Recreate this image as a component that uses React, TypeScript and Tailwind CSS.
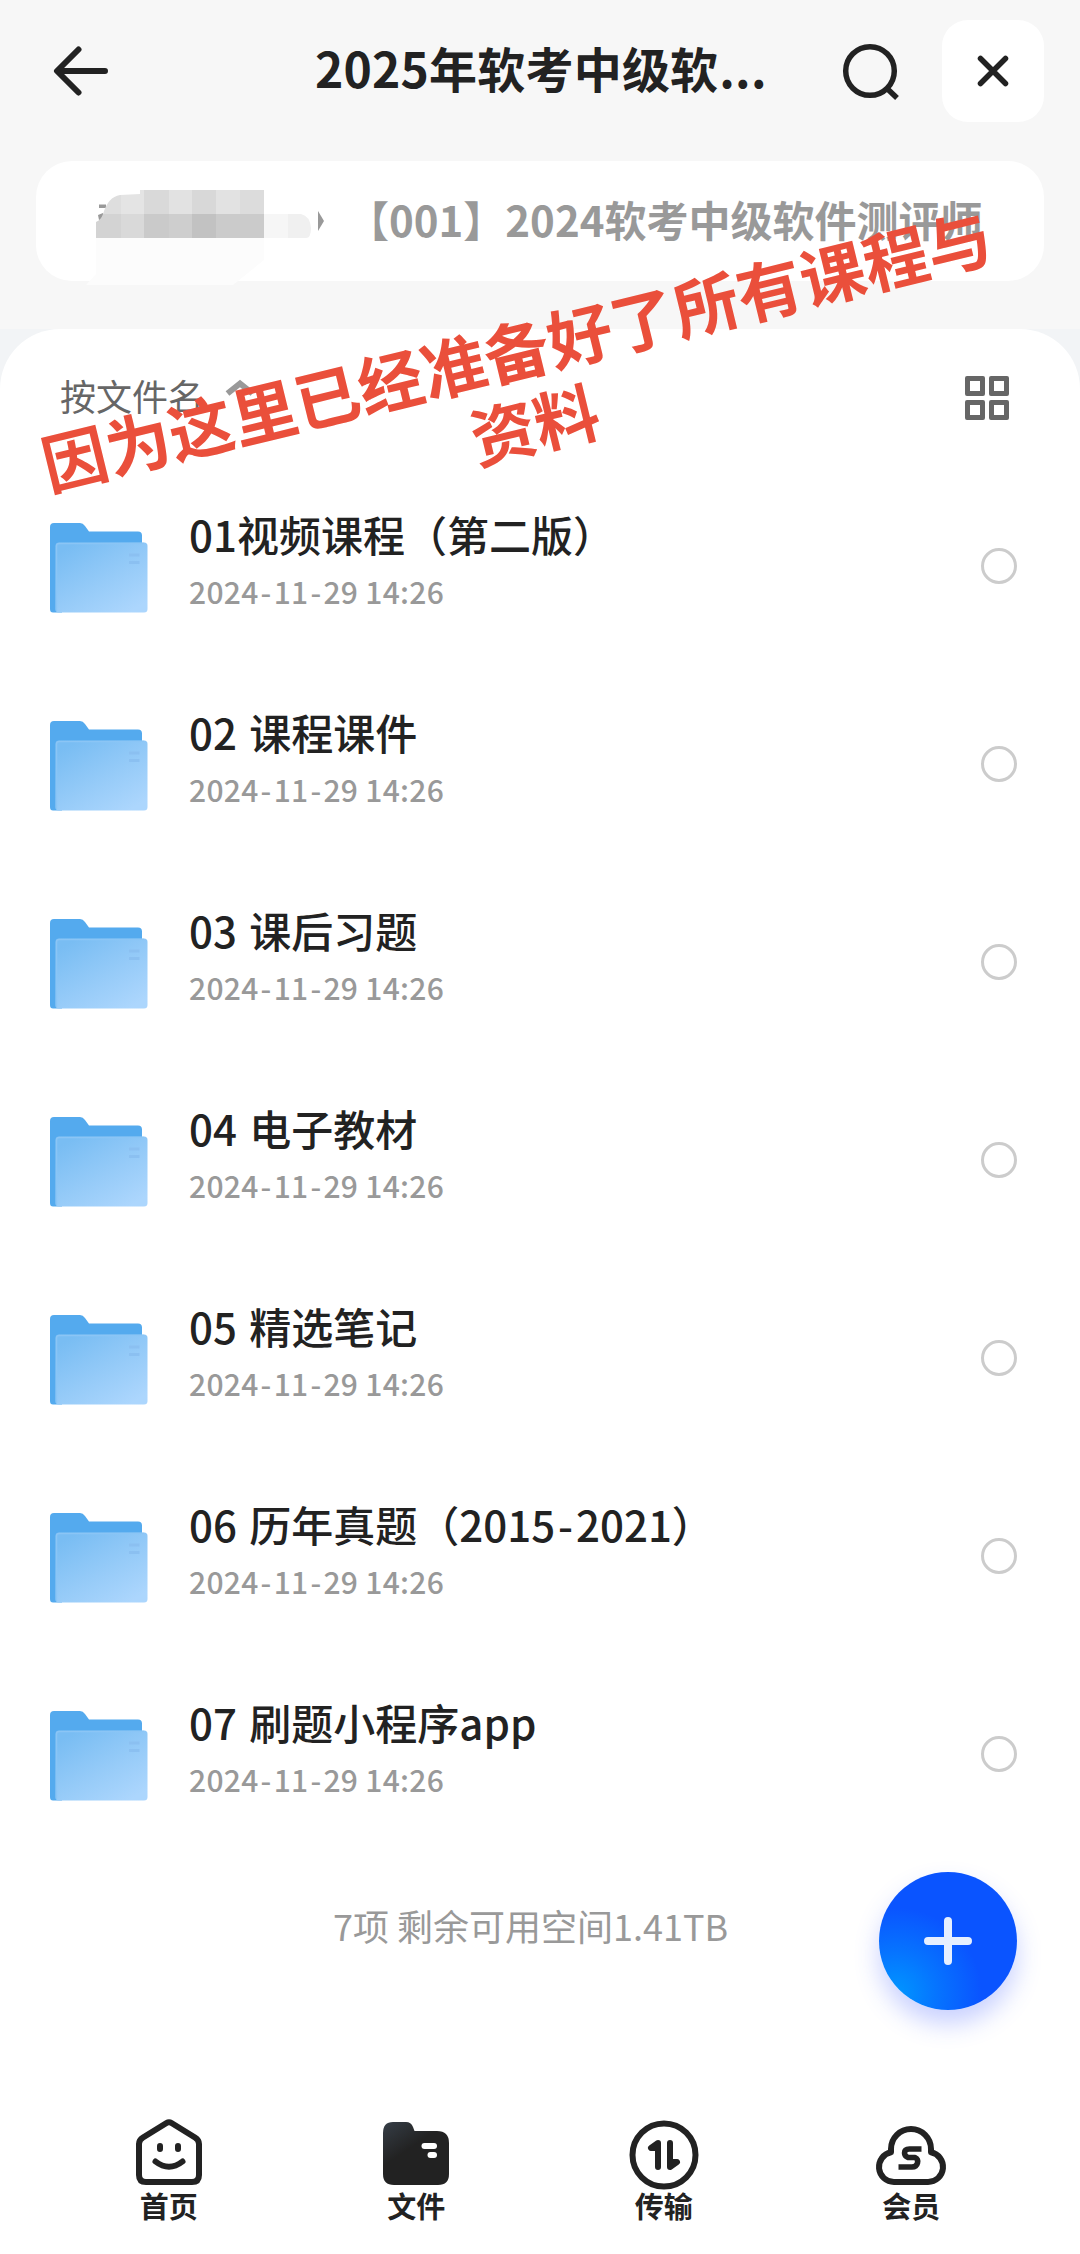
import { useState } from 'react'

type FileItem = {
  id: number
  name: string
  date: string
}

const files: FileItem[] = [
  { id: 1, name: '01视频课程（第二版）', date: '2024-11-29 14:26' },
  { id: 2, name: '02 课程课件', date: '2024-11-29 14:26' },
  { id: 3, name: '03 课后习题', date: '2024-11-29 14:26' },
  { id: 4, name: '04 电子教材', date: '2024-11-29 14:26' },
  { id: 5, name: '05 精选笔记', date: '2024-11-29 14:26' },
  { id: 6, name: '06 历年真题（2015-2021）', date: '2024-11-29 14:26' },
  { id: 7, name: '07 刷题小程序app', date: '2024-11-29 14:26' },
]

function BackIcon() {
  return (
    <svg width="56" height="50" viewBox="0 0 56 50" fill="none" stroke="#222" strokeWidth="6" strokeLinecap="round" strokeLinejoin="round">
      <path d="M25.500 3.500 L4 25 L25.500 46.500 M5 25 H52" />
    </svg>
  )
}

function SearchIcon() {
  return (
    <svg width="60" height="60" viewBox="0 0 60 60" fill="none" stroke="#222" strokeWidth="5.5">
      <circle cx="30" cy="30" r="24.3" />
      <path d="M46.500 47 L57 57" />
    </svg>
  )
}

function FolderIcon() {
  return (
    <svg width="98" height="90" viewBox="0 0 98 90" className="mt-[3px] block shrink-0">
      <defs>
        <linearGradient id="front" x1="0.1" y1="0.1" x2="0.8" y2="1">
          <stop offset="0" stopColor="#79bdf3" />
          <stop offset="0.55" stopColor="#96cbf8" />
          <stop offset="1" stopColor="#acd6fd" />
        </linearGradient>
      </defs>
      <path d="M4 0 H30 Q33 0 35 3 L39 8.500 H88 Q92 8.500 92 12.500 V60 H12 V89.500 H3 Q0 89.500 0 86 V4 Q0 0 4 0Z" fill="#54aaee" />
      <rect x="5.500" y="19.500" width="92" height="70" rx="3.500" fill="url(#front)" />
      <path d="M6.500 88 V23 Q6.500 20.500 9 20.500 H94" fill="none" stroke="#8bc5f5" strokeWidth="1.5" />
      <path d="M79 32 H89.500 M79 39.500 H89.500" stroke="#8bc0f1" strokeWidth="3" />
    </svg>
  )
}

function HomeIcon() {
  return (
    <svg width="72" height="72" viewBox="0 0 72 72" fill="none" stroke="#222" strokeWidth="6" strokeLinecap="round" strokeLinejoin="round">
      <path d="M33.500 5 Q36 3.500 38.500 5 L62 19.500 Q66 22 66 26 V57 Q66 64 59 64 H13 Q6 64 6 57 V26 Q6 22 10 19.500 Z" />
      <path d="M27 28 V31 M45 28 V31" />
      <path d="M22.500 43.500 Q36 54 49.500 43.500" />
    </svg>
  )
}

function FilesIcon() {
  return (
    <svg width="72" height="72" viewBox="0 0 72 72">
      <defs>
        <linearGradient id="files" x1="0.1" y1="0" x2="0.6" y2="0.7">
          <stop offset="0" stopColor="#343b43" />
          <stop offset="0.6" stopColor="#222" />
        </linearGradient>
      </defs>
      <path d="M13 4 H26 Q31 4 33 9 L34.500 13 H57 Q69 13 69 25 V56 Q69 67 58 67 H14 Q3 67 3 56 V15 Q3 4 13 4Z" fill="url(#files)" />
      <rect x="41.500" y="25" width="15.500" height="6" rx="3" fill="#fff" />
      <rect x="47.500" y="34" width="9.500" height="6" rx="3" fill="#fff" />
    </svg>
  )
}

function TransferIcon() {
  return (
    <svg width="72" height="72" viewBox="0 0 72 72" fill="none" stroke="#222" strokeWidth="6" strokeLinecap="round" strokeLinejoin="round">
      <circle cx="36" cy="37" r="31.500" />
      <path d="M30 49 V25 L23 30 H30 M42 25 V49 L49 44 H42" fill="#222" />
    </svg>
  )
}

function MemberIcon() {
  return (
    <svg width="72" height="72" viewBox="0 0 72 72" fill="none" stroke="#222" strokeWidth="6" strokeLinejoin="round">
      <path d="M19 64 A15 15 0 0 1 16 34.300 V31 A20 20 0 0 1 56 31 V34.300 A15 15 0 0 1 53 64 Z" />
      <path d="M46.500 31 H34.500 Q29.500 31 29.500 35 Q29.500 38 33 39.500 H40 Q43.500 41 42.500 45 Q41.500 49 37 49 H23.500" strokeWidth="5.500" />
    </svg>
  )
}

const tabs = [
  { label: '首页', icon: <HomeIcon /> },
  { label: '文件', icon: <FilesIcon /> },
  { label: '传输', icon: <TransferIcon /> },
  { label: '会员', icon: <MemberIcon /> },
]

function Header() {
  return (
    <header className="flex h-[142px] items-center pl-[53px] pr-9">
      <button aria-label="返回">
        <BackIcon />
      </button>
      <h1 className="ml-[206px] -mt-[8px] w-[470px] whitespace-nowrap text-[48px] leading-[60px] font-bold tracking-[0.2px]">
        2025年软考中级软<span className="ml-[1px] tracking-[0.2px]">...</span>
      </h1>
      <button aria-label="搜索" className="ml-[55px]">
        <SearchIcon />
      </button>
      <button aria-label="关闭" className="ml-auto flex size-[102px] items-center justify-center rounded-[26px] bg-white">
        <svg width="34" height="34" viewBox="0 0 34 34" stroke="#222" strokeWidth="5.5" strokeLinecap="round">
          <path d="M4.500 4.500 L29.500 29.500 M29.500 4.500 L4.500 29.500" />
        </svg>
      </button>
    </header>
  )
}

function Breadcrumb() {
  return (
    <nav className="mx-9 mt-[19px] flex h-[120px] items-center rounded-[36px] bg-white pl-[60px]">
      {/* masked folder name */}
      <svg width="230" height="50" viewBox="0 0 230 50" className="-mt-[12px] shrink-0 overflow-visible">
        <path d="M0 48 H168 V70 L137 95 H-10 L0 84 Z" fill="#fcfcfc" />
        <path d="M3 14.500 H10 V18 H3 Z M2 25 L7 23 V29 L3 30 Z" fill="#999" />
        <clipPath id="mask">
          <path d="M0 48 V32 Q5 30 7 24 Q12 7 24 5 L44 4 V0 H168 V24 H205 Q214 26 215 38 Q215 48 210 48 Z" />
        </clipPath>
        <g clipPath="url(#mask)">
          <path d="M0 0 H25 V24 H0Z" fill="#dedede" />
          <path d="M25 0 H48 V24 H25Z" fill="#e4e4e4" />
          <path d="M48 0 H73 V24 H48Z" fill="#d9d9d9" />
          <path d="M73 0 H96 V24 H73Z" fill="#e2e2e2" />
          <path d="M96 0 H120 V24 H96Z" fill="#d8d8d8" />
          <path d="M120 0 H144 V24 H120Z" fill="#e2e2e2" />
          <path d="M144 0 H168 V24 H144Z" fill="#dcdcdc" />
          <path d="M0 24 H25 V48 H0Z" fill="#d3d3d3" />
          <path d="M25 24 H48 V48 H25Z" fill="#d9d9d9" />
          <path d="M48 24 H73 V48 H48Z" fill="#cacaca" />
          <path d="M73 24 H96 V48 H73Z" fill="#cecece" />
          <path d="M96 24 H120 V48 H96Z" fill="#c2c2c2" />
          <path d="M120 24 H168 V48 H120Z" fill="#cbcbcb" />
          <path d="M168 24 H192 V48 H168Z" fill="#f6f6f6" />
          <path d="M192 24 H216 V48 H192Z" fill="#f0f0f0" />
        </g>
        <path d="M222 21 L228 31 L222 41 Z" fill="#999" />
      </svg>
      <span className="ml-[21px] -mt-[4px] whitespace-nowrap text-[42px] leading-[60px] font-bold text-[#999]">
        【001】2024软考中级软件测评师
      </span>
    </nav>
  )
}

// hyphens between digits get a little air on both sides
function Dashed({ text, dash }: { text: string; dash: string }) {
  return (
    <>
      {text.split('-').map((part, i) => (
        <span key={i}>
          {i > 0 && <span className={dash}>-</span>}
          {part}
        </span>
      ))}
    </>
  )
}

function FileRow({ file, checked, onToggle }: { file: FileItem; checked: boolean; onToggle: () => void }) {
  return (
    <li className="flex h-[198px] items-center pl-[50px] pr-[63px]">
      <FolderIcon />
      <div className="-mt-[12px] ml-[41px] flex-1">
        <p className="whitespace-nowrap text-[42px] leading-[60px] font-medium text-[#222] [word-spacing:3px]">
          <Dashed text={file.name} dash="px-[3px]" />
        </p>
        <p className="mt-[2px] text-[30px] leading-[50px] font-medium tracking-[0.3px] text-[#999]">
          <Dashed text={file.date} dash="px-[2px]" />
        </p>
      </div>
      <button
        onClick={onToggle}
        aria-label={file.name}
        className={checked ? 'size-9 rounded-full bg-blue-600' : 'size-9 rounded-full border-[3px] border-[#ccc]'}
      />
    </li>
  )
}

export default function App() {
  const [selected, setSelected] = useState<number[]>([])

  function toggle(id: number) {
    setSelected((prev) => (prev.includes(id) ? prev.filter((x) => x !== id) : [...prev, id]))
  }

  return (
    <main className="relative flex h-[2254px] w-[1080px] flex-col overflow-hidden bg-[#f7f7f7] text-[#222] font-['Noto_Sans_CJK_SC',sans-serif]">
      <Header />
      <Breadcrumb />

      <div className="mt-[48px] flex-1 bg-[#f2f4f6]">
        <section className="flex h-full flex-col rounded-t-[60px] bg-white">
          <div className="flex h-[138px] items-center pl-[60px] pr-[71px]">
            <span className="-mt-[6px] text-[36px] leading-[50px] text-[#666]">按文件名</span>
            <svg width="32" height="20" viewBox="0 0 32 20" className="-mt-[18px] ml-[20px]">
              <path d="M3.500 14.500 L16 4.500 L28.500 14.500" fill="none" stroke="#999" strokeWidth="6" />
            </svg>
            <button aria-label="网格" className="ml-auto grid grid-cols-2 gap-1">
              <i className="size-5 rounded-[2px] border-[5px] border-[#666]" />
              <i className="size-5 rounded-[2px] border-[5px] border-[#666]" />
              <i className="size-5 rounded-[2px] border-[5px] border-[#666]" />
              <i className="size-5 rounded-[2px] border-[5px] border-[#666]" />
            </button>
          </div>

          <ul>
            {files.map((file) => (
              <FileRow key={file.id} file={file} checked={selected.includes(file.id)} onToggle={() => toggle(file.id)} />
            ))}
          </ul>

          <p className="mt-[47px] pl-[333px] text-[36px] leading-[50px] text-[#999]">7项 剩余可用空间1.41TB</p>

          <footer className="mt-auto flex h-[136px] px-[45px]">
            {tabs.map((tab) => (
              <button key={tab.label} className="flex flex-1 flex-col items-center">
                {tab.icon}
                <span className="-mt-[3px] text-[29px] leading-[36px] font-bold">{tab.label}</span>
              </button>
            ))}
          </footer>
        </section>
      </div>

      <button
        aria-label="新建"
        className="absolute top-[1872px] left-[879px] flex size-[138px] items-center justify-center rounded-full bg-[radial-gradient(circle_at_12%_88%,#0096ff_0%,#0674ff_24%,#0a54ff_50%)] shadow-[0_14px_24px_rgba(60,90,255,0.28)]"
      >
        <svg width="48" height="48" viewBox="0 0 48 48" stroke="#e6efff" strokeWidth="8" strokeLinecap="round">
          <path d="M24 4 V44 M4 24 H44" />
        </svg>
      </button>

      {/* slogan laid across the list header */}
      <p className="absolute top-[309px] left-[25px] w-[1000px] rotate-[-13.7deg] text-center text-[65px] leading-[76px] font-bold whitespace-nowrap text-[#ea4f3b]">
        因为这里已经准备好了所有课程与
        <br />
        资料
      </p>
    </main>
  )
}
